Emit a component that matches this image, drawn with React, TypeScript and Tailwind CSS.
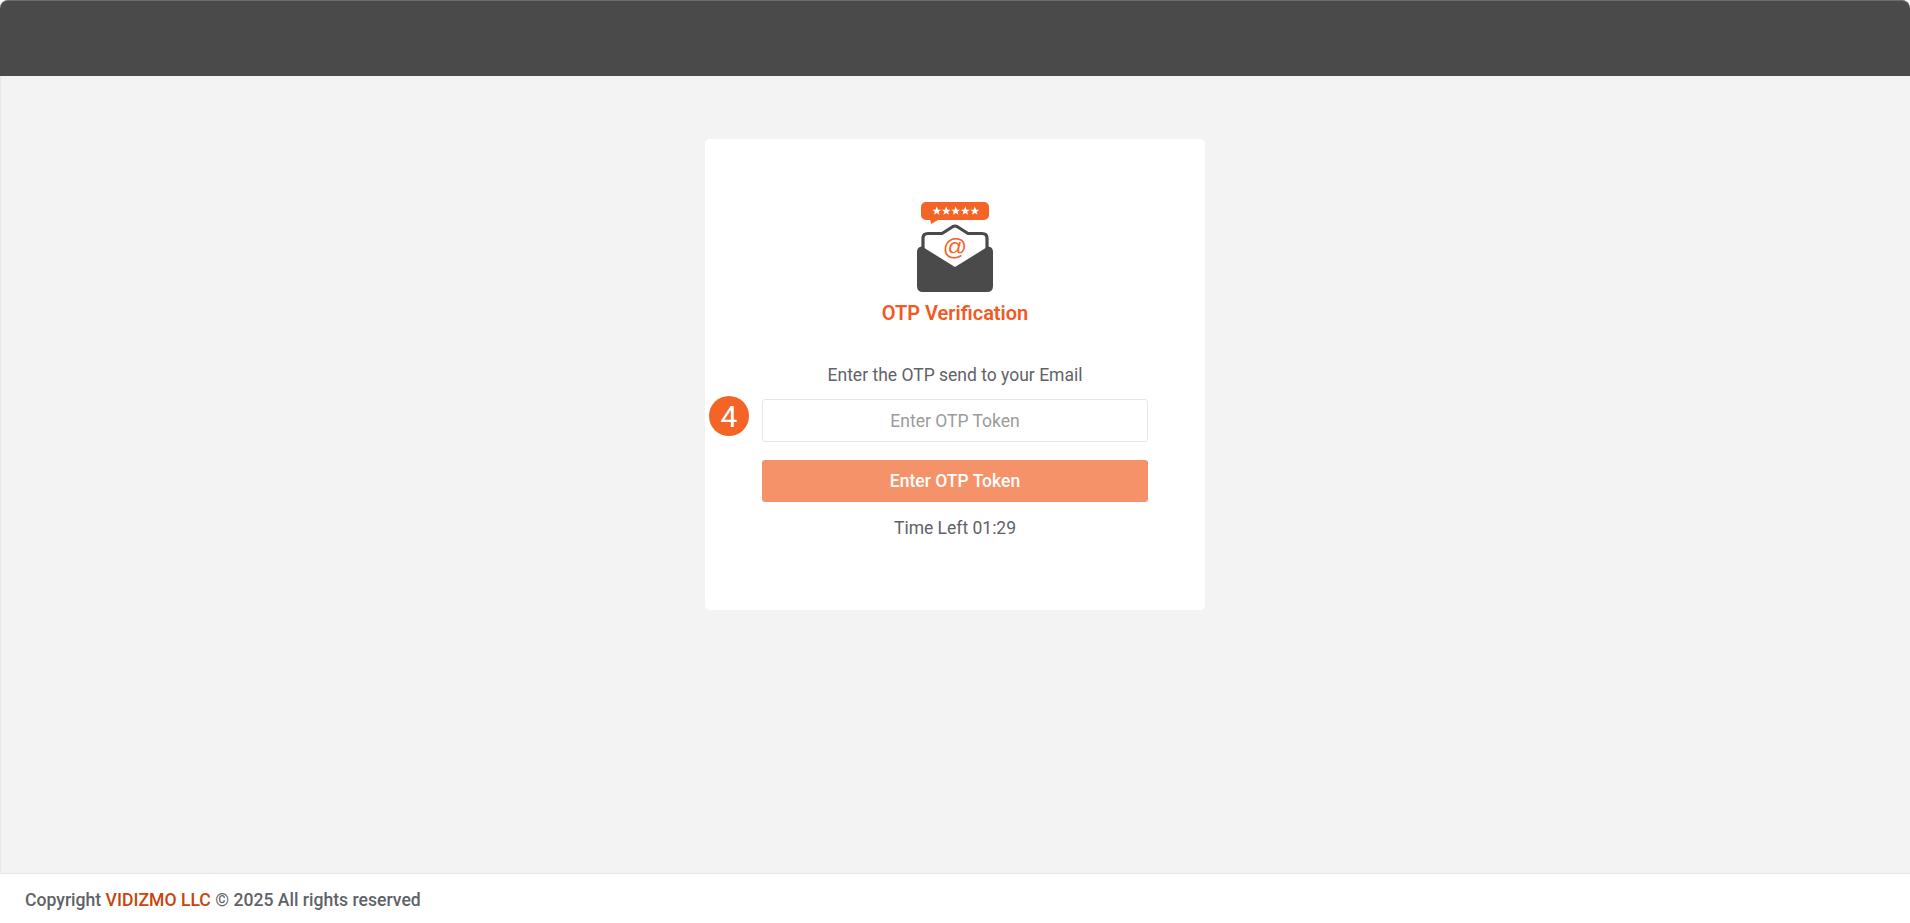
import React from 'react'

function MailIcon() {
  const stars = [21.7, 31.2, 40.7, 50.3, 59.8]
  return (
    <svg width="80" height="94" viewBox="0 0 80 94" fill="none">
      <rect x="6" y="2" width="68" height="18" rx="5" fill="#f46427" />
      <path d="M15 19 L16 24 L23 20 Z" fill="#f46427" />
      {stars.map((x) => (
        <path
          key={x}
          transform={`translate(${x} 11) scale(1.25)`}
          d="M0 -3.6 L1 -1.1 L3.5 -1.1 L1.5 0.5 L2.2 3 L0 1.6 L-2.2 3 L-1.5 0.5 L-3.5 -1.1 L-1 -1.1 Z"
          fill="#ffffff"
        />
      ))}
      <path
        d="M8 50 V38 Q8 33.5 13 33.5 H27 L38 26.5 Q40 25.5 42 26.5 L53 33.5 H67 Q72 33.5 72 38 V50 L40 70 Z"
        fill="#ffffff"
        stroke="#4a4a4a"
        strokeWidth="3.2"
        strokeLinejoin="round"
      />
      <path
        d="M2 52 Q2 47 7 46.6 L40 67 L73 46.6 Q78 47 78 52 V86 Q78 92 72 92 H8 Q2 92 2 86 Z"
        fill="#4a4a4a"
      />
      <text
        x="40"
        y="55"
        textAnchor="middle"
        fontFamily="'Liberation Sans', sans-serif"
        fontSize="24"
        fill="#f46427"
      >
        @
      </text>
    </svg>
  )
}

const App = () => {
  return (
    <div className="h-[923px] w-full flex flex-col bg-white font-['Roboto',sans-serif] overflow-hidden">
      <div className="h-[76px] shrink-0 bg-[#4a4a4a] rounded-t-[8px] border-t border-[#6b6b6b]" />

      <div className="flex-1 bg-[#f3f3f3] shadow-[inset_1px_0_0_#e8e8e8] flex flex-col items-center pt-[63px]">
        <div className="w-[500px] h-[471px] bg-white rounded-[5px] flex flex-col items-center pt-[61px] relative">
          <MailIcon />
          <h2 className="mt-[6px] text-[20px] leading-[26px] font-semibold text-[#f4591f]">OTP Verification</h2>

          <p className="mt-[37px] text-[17.5px] leading-[24px] text-[#5f6368]">Enter the OTP send to your Email</p>

          <div className="mt-[12px] w-[386px] relative">
            <span className="absolute left-[-53px] top-[-3px] w-[40px] h-[40px] rounded-full bg-[#f46427] text-white text-[30px] flex items-center justify-center">
              4
            </span>
            <input
              placeholder="Enter OTP Token"
              className="w-full h-[43px] border border-[#e6e6e6] rounded-[3px] text-center text-[17.5px] text-[#5f6368] placeholder:text-[#9b9b9b] outline-none"
            />
            <button className="mt-[18px] w-full h-[42px] bg-[#f69269] rounded-[3px] text-white text-[17.5px] font-medium">
              Enter OTP Token
            </button>
          </div>

          <p className="mt-[14px] text-[17.5px] leading-[24px] text-[#5f6368]">Time Left 01:29</p>
        </div>
      </div>

      <div className="h-[50px] shrink-0 bg-white border-t border-[#e6e6e6] rounded-b-[12px] flex items-center pl-[25px] pt-[3px] text-[17.6px] font-medium text-[#5f6368]">
        <span>
          Copyright <span className="text-[#c9440a]">VIDIZMO LLC</span> © 2025 All rights reserved
        </span>
      </div>
    </div>
  )
}

export default App
